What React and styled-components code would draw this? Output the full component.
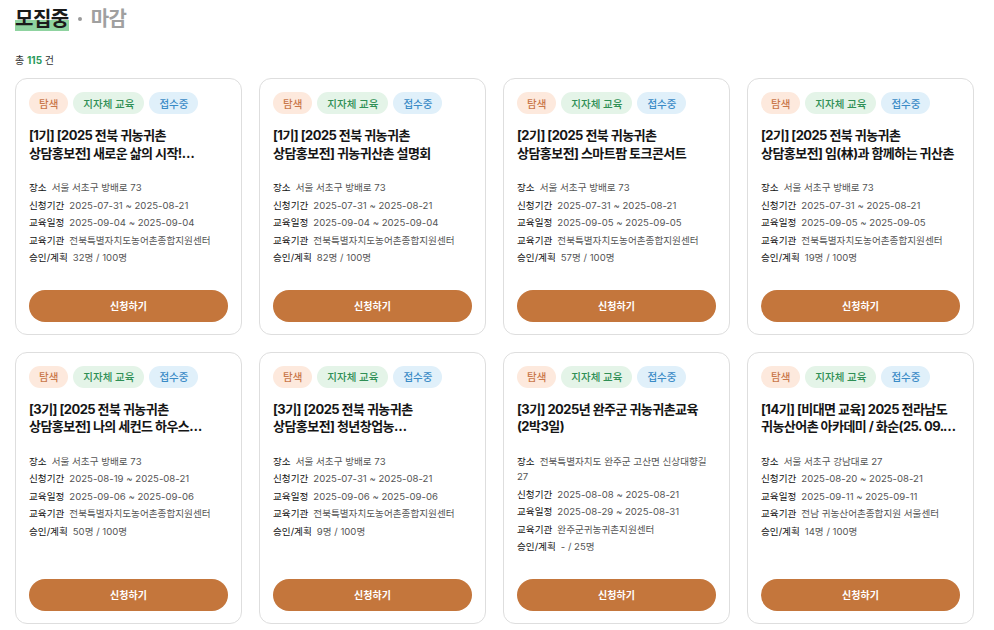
import React from "react";
import styled, { createGlobalStyle } from "styled-components";

const GlobalStyle = createGlobalStyle`
  * { box-sizing: border-box; }
  body {
    margin: 0;
    background: #ffffff;
    font-family: Inter, "Noto Sans CJK KR", "Noto Sans", sans-serif;
    color: #222;
    word-break: keep-all;
  }
`;

const Page = styled.div`
  padding: 7px 20px 12px 15px;
`;

const Header = styled.div`
  display: flex;
  align-items: center;
  gap: 9px;
  height: 24px;
`;

const ActiveTab = styled.span`
  font-size: 20px;
  font-weight: 700;
  line-height: 24px;
  color: #1a1a1a;
  background: linear-gradient(to bottom, transparent 54%, #8fd3a0 54%);
  letter-spacing: -0.5px;
`;

const Dot = styled.span`
  width: 4px;
  height: 4px;
  border-radius: 50%;
  background: #9a9a9a;
`;

const InactiveTab = styled.span`
  font-size: 20px;
  font-weight: 700;
  line-height: 24px;
  color: #a0a0a0;
  letter-spacing: -0.5px;
`;

const Count = styled.div`
  margin-top: 22px;
  font-size: 10px;
  line-height: 14px;
  color: #333;
`;

const CountNum = styled.b`
  color: #2a9a5a;
  font-weight: 700;
`;

const Grid = styled.div`
  margin-top: 11px;
  display: grid;
  grid-template-columns: repeat(4, 1fr);
  gap: 17px;
`;

const Card = styled.div`
  display: flex;
  flex-direction: column;
  border: 1px solid #dedede;
  border-radius: 12px;
  padding: 13px 13px 12px 13px;
  background: #fff;
`;

const Tags = styled.div`
  display: flex;
  gap: 5px;
`;

const tagColors = {
  orange: { bg: "#fde9dd", fg: "#c9774a" },
  green: { bg: "#e4f4e8", fg: "#2f8f55" },
  blue: { bg: "#e0f0fa", fg: "#3a8bc6" },
};

const Tag = styled.span`
  height: 22px;
  padding: 0 10px;
  border-radius: 11px;
  display: inline-flex;
  align-items: center;
  font-size: 10.5px;
  font-weight: 500;
  background: ${(p) => tagColors[p.$tone].bg};
  color: ${(p) => tagColors[p.$tone].fg};
`;

const Title = styled.h3`
  margin: 13px 0 0 0;
  font-size: 13px;
  font-weight: 700;
  line-height: 17.5px;
  color: #151515;
  letter-spacing: -0.55px;
  display: -webkit-box;
  -webkit-line-clamp: 2;
  -webkit-box-orient: vertical;
  overflow: hidden;
  min-height: 35px;
`;

const InfoList = styled.dl`
  margin: 18px 0 0 0;
  display: flex;
  flex-direction: column;
  gap: 2px;
`;

const InfoRow = styled.div`
  font-size: 9.6px;
  line-height: 15.5px;
`;

const Label = styled.dt`
  display: inline;
  font-weight: 400;
  color: #111;
  margin-right: 5px;
`;

const Value = styled.dd`
  display: inline;
  margin: 0;
  color: #555;
`;

const ApplyButton = styled.button`
  margin-top: auto;
  height: 32px;
  width: 100%;
  border: none;
  border-radius: 16px;
  background: #c4763c;
  color: #fff;
  font-family: inherit;
  font-size: 10px;
  font-weight: 700;
  cursor: pointer;
`;

const Spacer = styled.div`
  flex: 1 0 24px;
`;

const courses = [
  {
    title: "[1기] [2025 전북 귀농귀촌 상담홍보전] 새로운 삶의 시작! 귀농귀촌 이야기",
    place: "서울 서초구 방배로 73",
    apply: "2025-07-31 ~ 2025-08-21",
    edu: "2025-09-04 ~ 2025-09-04",
    org: "전북특별자치도농어촌종합지원센터",
    count: "32명 / 100명",
  },
  {
    title: "[1기] [2025 전북 귀농귀촌 상담홍보전] 귀농귀산촌 설명회",
    place: "서울 서초구 방배로 73",
    apply: "2025-07-31 ~ 2025-08-21",
    edu: "2025-09-04 ~ 2025-09-04",
    org: "전북특별자치도농어촌종합지원센터",
    count: "82명 / 100명",
  },
  {
    title: "[2기] [2025 전북 귀농귀촌 상담홍보전] 스마트팜 토크콘서트",
    place: "서울 서초구 방배로 73",
    apply: "2025-07-31 ~ 2025-08-21",
    edu: "2025-09-05 ~ 2025-09-05",
    org: "전북특별자치도농어촌종합지원센터",
    count: "57명 / 100명",
  },
  {
    title: "[2기] [2025 전북 귀농귀촌 상담홍보전] 임(林)과 함께하는 귀산촌",
    place: "서울 서초구 방배로 73",
    apply: "2025-07-31 ~ 2025-08-21",
    edu: "2025-09-05 ~ 2025-09-05",
    org: "전북특별자치도농어촌종합지원센터",
    count: "19명 / 100명",
  },
  {
    title: "[3기] [2025 전북 귀농귀촌 상담홍보전] 나의 세컨드 하우스 이야기마당",
    place: "서울 서초구 방배로 73",
    apply: "2025-08-19 ~ 2025-08-21",
    edu: "2025-09-06 ~ 2025-09-06",
    org: "전북특별자치도농어촌종합지원센터",
    count: "50명 / 100명",
  },
  {
    title: "[3기] [2025 전북 귀농귀촌 상담홍보전] 청년창업농 성공사례발표회",
    place: "서울 서초구 방배로 73",
    apply: "2025-07-31 ~ 2025-08-21",
    edu: "2025-09-06 ~ 2025-09-06",
    org: "전북특별자치도농어촌종합지원센터",
    count: "9명 / 100명",
  },
  {
    title: "[3기] 2025년 완주군 귀농귀촌교육 (2박3일)",
    place: "전북특별자치도 완주군 고산면 신상대향길 27",
    apply: "2025-08-08 ~ 2025-08-21",
    edu: "2025-08-29 ~ 2025-08-31",
    org: "완주군귀농귀촌지원센터",
    count: "- / 25명",
  },
  {
    title: "[14기] [비대면 교육] 2025 전라남도 귀농산어촌 아카데미 / 화순(25. 09. 11.)",
    place: "서울 서초구 강남대로 27",
    apply: "2025-08-20 ~ 2025-08-21",
    edu: "2025-09-11 ~ 2025-09-11",
    org: "전남 귀농산어촌종합지원 서울센터",
    count: "14명 / 100명",
  },
];

function CourseCard({ c }) {
  return (
    <Card>
      <Tags>
        <Tag $tone="orange">탐색</Tag>
        <Tag $tone="green">지자체 교육</Tag>
        <Tag $tone="blue">접수중</Tag>
      </Tags>
      <Title>{c.title}</Title>
      <InfoList>
        <InfoRow>
          <Label>장소</Label>
          <Value>{c.place}</Value>
        </InfoRow>
        <InfoRow>
          <Label>신청기간</Label>
          <Value>{c.apply}</Value>
        </InfoRow>
        <InfoRow>
          <Label>교육일정</Label>
          <Value>{c.edu}</Value>
        </InfoRow>
        <InfoRow>
          <Label>교육기관</Label>
          <Value>{c.org}</Value>
        </InfoRow>
        <InfoRow>
          <Label>승인/계획</Label>
          <Value>{c.count}</Value>
        </InfoRow>
      </InfoList>
      <Spacer />
      <ApplyButton>신청하기</ApplyButton>
    </Card>
  );
}

export default function App() {
  return (
    <>
      <GlobalStyle />
      <Page>
        <Header>
          <ActiveTab>모집중</ActiveTab>
          <Dot />
          <InactiveTab>마감</InactiveTab>
        </Header>
        <Count>
          총 <CountNum>115</CountNum> 건
        </Count>
        <Grid>
          {courses.map((c, i) => (
            <CourseCard key={i} c={c} />
          ))}
        </Grid>
      </Page>
    </>
  );
}
